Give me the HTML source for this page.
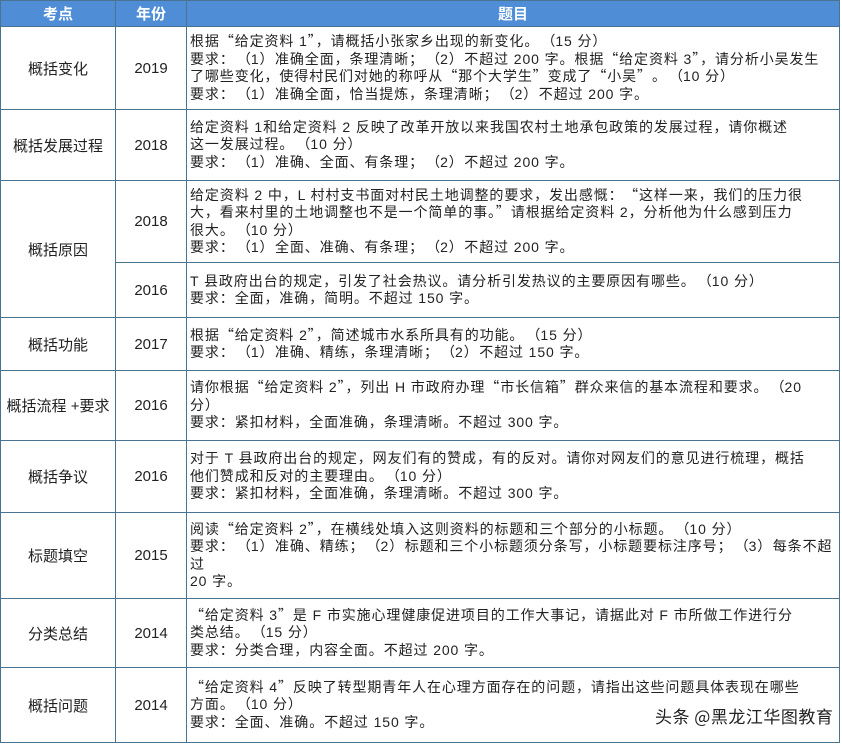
<!DOCTYPE html>
<html><head><meta charset="utf-8"><style>
html,body{margin:0;padding:0;background:#fff;width:842px;height:745px;overflow:hidden}
table{position:absolute;left:0;top:0;border-collapse:collapse;table-layout:fixed;width:839px;font-family:"Liberation Sans","Noto Sans CJK SC",sans-serif;font-size:14px;color:#222}
td,th{border:1px solid #4a7390;padding:0;vertical-align:middle}
th{background:#4f8ed6;color:#fff;font-weight:bold;font-size:15px;height:25px}
td.c{text-align:center;font-size:15px}
td.t{padding-left:3px;line-height:17.5px;letter-spacing:0.9px;white-space:nowrap}
q{quotes:none;font-family:"Noto Sans CJK SC",sans-serif;font-feature-settings:"fwid" 1}
q:before,q:after{content:none}
i{font-style:normal;display:inline-block;width:15.5px;text-align:left;letter-spacing:0}
i.o{text-align:right}
.wm{position:absolute;left:655px;top:703px;font-family:"Noto Sans CJK SC",sans-serif;font-size:17px;color:#222;white-space:nowrap;letter-spacing:0.5px}
</style></head><body>
<table>
<colgroup><col style="width:115px"><col style="width:71px"><col style="width:653px"></colgroup>
<tr><th>考点</th><th>年份</th><th>题目</th></tr>
<tr style="height:83px"><td class="c">概括变化</td><td class="c">2019</td><td class="t">根据<q>“</q>给定资料 1<q>”</q>，请概括小张家乡出现的新变化<i>。</i><i class="o">（</i>15 分<i>）</i><br>要求<i>：</i><i class="o">（</i>1<i>）</i>准确全面，条理清晰<i>；</i><i class="o">（</i>2<i>）</i>不超过 200 字。根据<q>“</q>给定资料 3<q>”</q>，请分析小吴发生<br>了哪些变化，使得村民们对她的称呼从<q>“</q>那个大学生<q>”</q>变成了<q>“</q>小吴<q>”</q><i>。</i><i class="o">（</i>10 分<i>）</i><br>要求<i>：</i><i class="o">（</i>1<i>）</i>准确全面，恰当提炼，条理清晰<i>；</i><i class="o">（</i>2<i>）</i>不超过 200 字。</td></tr>
<tr style="height:71px"><td class="c">概括发展过程</td><td class="c">2018</td><td class="t">给定资料 1和给定资料 2 反映了改革开放以来我国农村土地承包政策的发展过程，请你概述<br>这一发展过程<i>。</i><i class="o">（</i>10 分<i>）</i><br>要求<i>：</i><i class="o">（</i>1<i>）</i>准确、全面、有条理<i>；</i><i class="o">（</i>2<i>）</i>不超过 200 字。</td></tr>
<tr style="height:82px"><td class="c" rowspan="2">概括原因</td><td class="c">2018</td><td class="t">给定资料 2 中，L 村村支书面对村民土地调整的要求，发出感慨<i>：</i><q>“</q>这样一来，我们的压力很<br>大，看来村里的土地调整也不是一个简单的事。<q>”</q>请根据给定资料 2，分析他为什么感到压力<br>很大<i>。</i><i class="o">（</i>10 分<i>）</i><br>要求<i>：</i><i class="o">（</i>1<i>）</i>全面、准确、有条理<i>；</i><i class="o">（</i>2<i>）</i>不超过 200 字。</td></tr>
<tr style="height:55px"><td class="c">2016</td><td class="t">T 县政府出台的规定，引发了社会热议。请分析引发热议的主要原因有哪些<i>。</i><i class="o">（</i>10 分<i>）</i><br>要求：全面，准确，简明。不超过 150 字。</td></tr>
<tr style="height:53px"><td class="c">概括功能</td><td class="c">2017</td><td class="t">根据<q>“</q>给定资料 2<q>”</q>，简述城市水系所具有的功能<i>。</i><i class="o">（</i>15 分<i>）</i><br>要求<i>：</i><i class="o">（</i>1<i>）</i>准确、精练，条理清晰<i>；</i><i class="o">（</i>2<i>）</i>不超过 150 字。</td></tr>
<tr style="height:70px"><td class="c">概括流程 +要求</td><td class="c">2016</td><td class="t">请你根据<q>“</q>给定资料 2<q>”</q>，列出 H 市政府办理<q>“</q>市长信箱<q>”</q>群众来信的基本流程和要求<i>。</i><i class="o">（</i>20<br>分<i>）</i><br>要求：紧扣材料，全面准确，条理清晰。不超过 300 字。</td></tr>
<tr style="height:72px"><td class="c">概括争议</td><td class="c">2016</td><td class="t">对于 T 县政府出台的规定，网友们有的赞成，有的反对。请你对网友们的意见进行梳理，概括<br>他们赞成和反对的主要理由<i>。</i><i class="o">（</i>10 分<i>）</i><br>要求：紧扣材料，全面准确，条理清晰。不超过 300 字。</td></tr>
<tr style="height:86px"><td class="c">标题填空</td><td class="c">2015</td><td class="t">阅读<q>“</q>给定资料 2<q>”</q>，在横线处填入这则资料的标题和三个部分的小标题<i>。</i><i class="o">（</i>10 分<i>）</i><br>要求<i>：</i><i class="o">（</i>1<i>）</i>准确、精练<i>；</i><i class="o">（</i>2<i>）</i>标题和三个小标题须分条写，小标题要标注序号<i>；</i><i class="o">（</i>3<i>）</i>每条不超<br>过<br>20 字。</td></tr>
<tr style="height:69px"><td class="c">分类总结</td><td class="c">2014</td><td class="t"><q>“</q>给定资料 3<q>”</q>是 F 市实施心理健康促进项目的工作大事记，请据此对 F 市所做工作进行分<br>类总结<i>。</i><i class="o">（</i>15 分<i>）</i><br>要求：分类合理，内容全面。不超过 200 字。</td></tr>
<tr style="height:75px"><td class="c">概括问题</td><td class="c">2014</td><td class="t"><q>“</q>给定资料 4<q>”</q>反映了转型期青年人在心理方面存在的问题，请指出这些问题具体表现在哪些<br>方面<i>。</i><i class="o">（</i>10 分<i>）</i><br>要求：全面、准确。不超过 150 字。</td></tr>
</table>
<div class="wm">头条 @黑龙江华图教育</div>
</body></html>
